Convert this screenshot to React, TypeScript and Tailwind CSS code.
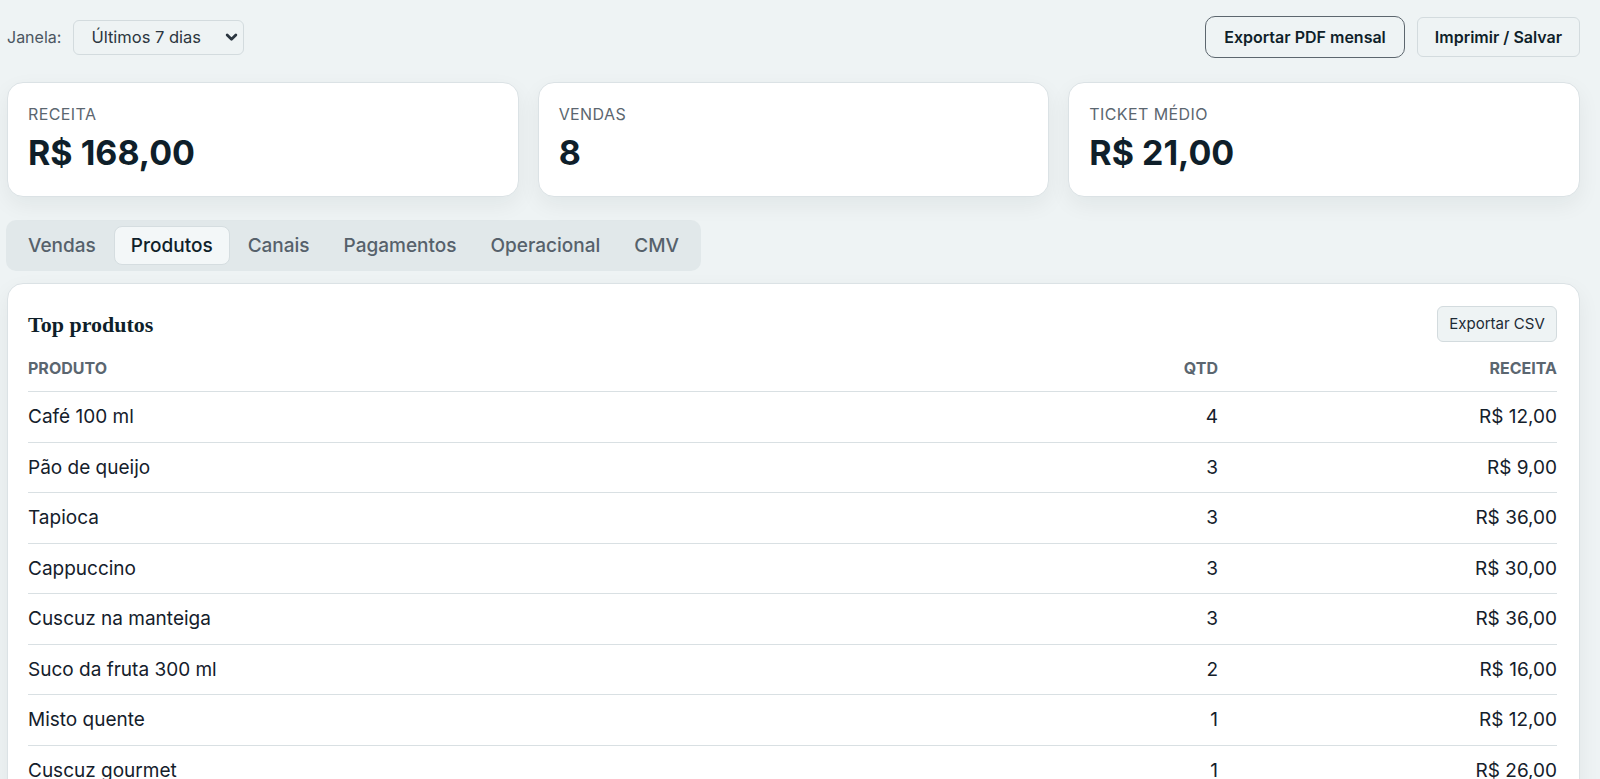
import React from 'react';

const kpis = [
  { label: 'Receita', value: 'R$ 168,00' },
  { label: 'Vendas', value: '8' },
  { label: 'Ticket médio', value: 'R$ 21,00' },
];

const tabs = ['Vendas', 'Produtos', 'Canais', 'Pagamentos', 'Operacional', 'CMV'];

const produtos = [
  { nome: 'Café 100 ml', qtd: 4, receita: 'R$ 12,00' },
  { nome: 'Pão de queijo', qtd: 3, receita: 'R$ 9,00' },
  { nome: 'Tapioca', qtd: 3, receita: 'R$ 36,00' },
  { nome: 'Cappuccino', qtd: 3, receita: 'R$ 30,00' },
  { nome: 'Cuscuz na manteiga', qtd: 3, receita: 'R$ 36,00' },
  { nome: 'Suco da fruta 300 ml', qtd: 2, receita: 'R$ 16,00' },
  { nome: 'Misto quente', qtd: 1, receita: 'R$ 12,00' },
  { nome: 'Cuscuz gourmet', qtd: 1, receita: 'R$ 26,00' },
  { nome: 'Bolo de milho', qtd: 1, receita: 'R$ 8,00' },
];

export default function App() {
  return (
    <div className="min-h-screen bg-[#eef3f4] pl-[6px] pr-[20px] pt-[16px] pb-10 font-['Inter',sans-serif] text-[#0f1f2a]">
      {/* Top bar */}
      <div className="flex h-[42px] items-center justify-between">
        <div className="flex items-center gap-3 pl-[1px]">
          <span className="text-[16px] text-[#4b5661]">Janela:</span>
          <div className="relative">
            <select className="h-[35px] w-[171px] appearance-none rounded-md border border-[#d3dbde] bg-[#eef3f4] pl-[17px] pr-8 text-[16.5px] text-[#2b3640] outline-none">
              <option>Últimos 7 dias</option>
              <option>Últimos 30 dias</option>
            </select>
            <svg
              className="pointer-events-none absolute right-[6px] top-1/2 h-[13px] w-[13px] -translate-y-1/2"
              viewBox="0 0 12 12"
              fill="none"
            >
              <path d="M2 4.2l4 3.8 4-3.8" stroke="#2b3640" strokeWidth="2.6" strokeLinecap="round" strokeLinejoin="round" />
            </svg>
          </div>
        </div>
        <div className="flex items-center gap-3">
          <button className="h-[42px] w-[200px] rounded-[10px] border border-[#5c666e] bg-[#eef3f4] text-[16px] font-semibold text-[#0f1f2a]">
            Exportar PDF mensal
          </button>
          <button className="h-[40px] w-[163px] rounded-md border border-[#d3dbde] bg-[#eef3f4] text-[16px] font-semibold text-[#0f1f2a]">
            Imprimir / Salvar
          </button>
        </div>
      </div>

      {/* KPI cards */}
      <div className="mt-6 grid grid-cols-3 gap-[19px] pl-[1px]">
        {kpis.map((k) => (
          <div
            key={k.label}
            className="h-[115px] rounded-2xl border border-[#dbe2e5] bg-white px-[20px] pt-[20px] shadow-[0_8px_22px_rgba(15,31,42,0.06)]"
          >
            <div className="text-[16px] uppercase leading-[22px] tracking-wide text-[#5b6670]">{k.label}</div>
            <div className="mt-[7px] text-[34px] font-bold leading-[42px] text-[#0f1f2a]">{k.value}</div>
          </div>
        ))}
      </div>

      {/* Tabs */}
      <div className="mt-[23px] flex w-fit gap-[2px] rounded-[10px] bg-[#e1e8ea] p-[6px]">
        {tabs.map((t) =>
          t === 'Produtos' ? (
            <div
              key={t}
              className="flex h-[39px] items-center rounded-lg border border-[#d5dde0] bg-[#f3f7f8] px-[16px] pt-[2px] text-[19px] font-medium text-[#0f1f2a]"
            >
              {t}
            </div>
          ) : (
            <div key={t} className="flex h-[39px] items-center px-[16px] pt-[2px] text-[19px] font-medium text-[#56616b]">
              {t}
            </div>
          )
        )}
      </div>

      {/* Top produtos */}
      <div className="mt-[12px] ml-[1px] rounded-2xl border border-[#dbe2e5] bg-white pl-[20px] pr-[22px] pt-[22px] shadow-[0_8px_22px_rgba(15,31,42,0.06)]">
        <div className="flex items-center justify-between">
          <h2 className="font-['Liberation_Serif',serif] text-[22px] font-bold text-[#0f1f2a]">Top produtos</h2>
          <button className="h-[36px] w-[120px] rounded-md border border-[#d3dbde] bg-[#eef3f4] text-[15px] text-[#1c2a35]">
            Exportar CSV
          </button>
        </div>
        <div className="mt-[3px]">
          <div className="grid grid-cols-[1fr_200px_339px] border-b border-[#d9e0e3] pt-3 pb-3 text-[16px] font-bold uppercase leading-[22px] text-[#5b6670]">
            <div>Produto</div>
            <div className="text-right">Qtd</div>
            <div className="text-right">Receita</div>
          </div>
          {produtos.map((p) => (
            <div
              key={p.nome}
              className="grid grid-cols-[1fr_200px_339px] border-b border-[#d9e0e3] py-3 text-[19px] leading-[25.5px] text-[#14202b]"
            >
              <div>{p.nome}</div>
              <div className="text-right">{p.qtd}</div>
              <div className="text-right">{p.receita}</div>
            </div>
          ))}
        </div>
      </div>
    </div>
  );
}
